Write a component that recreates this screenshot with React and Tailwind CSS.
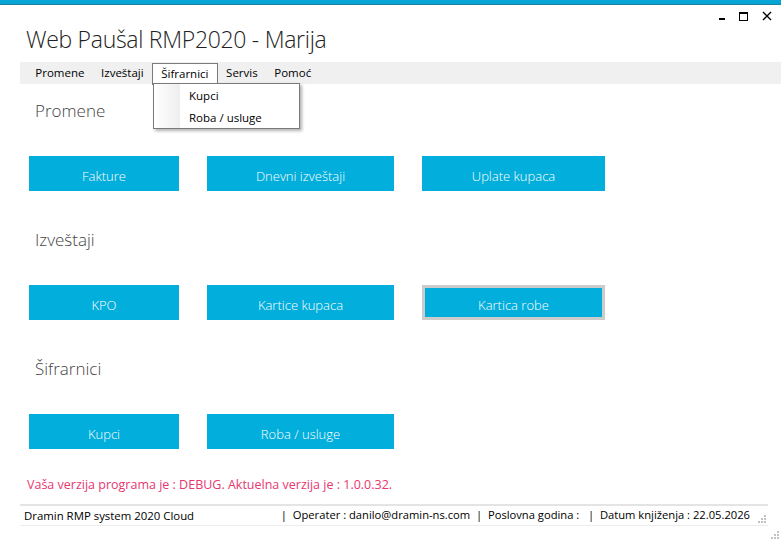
import React from 'react';

const sans = { fontFamily: '"Open Sans", "Noto Sans", Arial, sans-serif' };

const sections = [
    { title: 'Promene', buttons: ['Fakture', 'Dnevni izveštaji', 'Uplate kupaca'] },
    { title: 'Izveštaji', buttons: ['KPO', 'Kartice kupaca', 'Kartica robe'] },
    { title: 'Šifrarnici', buttons: ['Kupci', 'Roba / usluge'] },
];

const widths = ['w-[150px]', 'w-[187px]', 'w-[183px]'];

const menu = ['Promene', 'Izveštaji', 'Šifrarnici', 'Servis', 'Pomoć'];

// small dotted resize grip
const Grip = () => (
    <svg width="8" height="8" viewBox="0 0 8 8" className="shrink-0">
        <rect x="6" y="0" width="2" height="2" fill="#c3c3c3" />
        <rect x="3" y="3" width="2" height="2" fill="#c3c3c3" />
        <rect x="6" y="3" width="2" height="2" fill="#c3c3c3" />
        <rect x="0" y="6" width="2" height="2" fill="#c3c3c3" />
        <rect x="3" y="6" width="2" height="2" fill="#c3c3c3" />
        <rect x="6" y="6" width="2" height="2" fill="#c3c3c3" />
    </svg>
);

const App = () => {
    return (
        <div className="relative w-[781px] h-[543px] bg-white overflow-hidden flex flex-col" style={sans}>
            {/* Top accent stripe */}
            <div className="h-[5px] bg-[#05a6d6] border-b border-[#1d7fa0] shrink-0"></div>

            {/* Window controls */}
            <div className="h-[20px] flex justify-end items-center gap-[14px] pr-[9px] pt-[2px]">
                <div className="w-[6px] h-[2px] bg-black mt-[6px]"></div>
                <div className="w-[9px] h-[9px] border border-black border-t-2"></div>
                <svg width="10" height="10" viewBox="0 0 10 10">
                    <path d="M1 1 L9 9 M9 1 L1 9" stroke="#000" strokeWidth="1.4" />
                </svg>
            </div>

            {/* Title */}
            <div className="h-[37px] pl-[26px] pb-[8px] flex items-center">
                <h1 className="text-[23px] font-light text-[#222] leading-none tracking-[-0.3px]">Web Paušal RMP2020 - Marija</h1>
            </div>

            {/* Menu bar */}
            <div className="relative ml-[20px] h-[22px] bg-[#f0f0f0] flex items-center text-[11.5px] text-black pl-[7px]">
                {menu.map((item) => (
                    <div
                        key={item}
                        className={`h-[22px] flex items-center px-[8.3px] ${item === 'Šifrarnici' ? 'border border-[#7a7a7a] border-b-0 bg-white mt-[1px]' : ''}`}
                    >
                        {item}
                    </div>
                ))}

                {/* Open dropdown */}
                <div className="absolute left-[133px] top-[21px] w-[147px] h-[46px] bg-white border border-[#7a7a7a] shadow-[2px_2px_3px_rgba(0,0,0,0.3)] flex z-10">
                    <div className="w-[26px] bg-gradient-to-r from-white to-[#eeeeee]"></div>
                    <div className="flex flex-col pl-[9px] pt-[1px] text-[11.5px]">
                        <div className="h-[22px] flex items-center">Kupci</div>
                        <div className="h-[22px] flex items-center">Roba / usluge</div>
                    </div>
                </div>
            </div>

            {/* Sections */}
            <div className="flex flex-col pl-[29px] pt-[12px]">
                {sections.map((section, i) => (
                    <div key={section.title} className={i > 0 ? 'mt-[34px]' : ''}>
                        <h2 className="h-[30px] flex items-center pl-[6px] text-[17px] font-light text-[#444]">{section.title}</h2>
                        <div className="flex gap-[28px] mt-[30px]">
                            {section.buttons.map((label, j) => (
                                <button
                                    key={label}
                                    className={`${widths[j]} h-[35px] bg-[#02aedb] text-white text-[13px] font-light flex items-center justify-center pt-[6px] ${label === 'Kartica robe' ? 'border-[3px] border-[#cccccc]' : ''}`}
                                >
                                    {label}
                                </button>
                            ))}
                        </div>
                    </div>
                ))}

                <p className="mt-[28px] h-[16px] flex items-center text-[12.5px] text-[#e6376f] -ml-[2px]">
                    Vaša verzija programa je : DEBUG. Aktuelna verzija je : 1.0.0.32.
                </p>
            </div>

            {/* Status bar */}
            <div className="mt-[11px] ml-[20px] w-[748px] h-[22px] border-t-2 border-[#e4e4e4] border-b border-b-[#ececec] bg-white flex items-center text-[11.4px] text-black pl-[4px] pr-[2px]">
                <span>Dramin RMP system 2020 Cloud</span>
                <span className="ml-auto whitespace-pre text-[11.2px]">|  Operater : danilo@dramin-ns.com  |  Poslovna godina :   |  Datum knjiženja : 22.05.2026</span>
                <div className="ml-[8px] self-end mb-[2px]"><Grip /></div>
            </div>

            <div className="absolute right-[2px] bottom-[4px]"><Grip /></div>
        </div>
    );
};

export default App;
